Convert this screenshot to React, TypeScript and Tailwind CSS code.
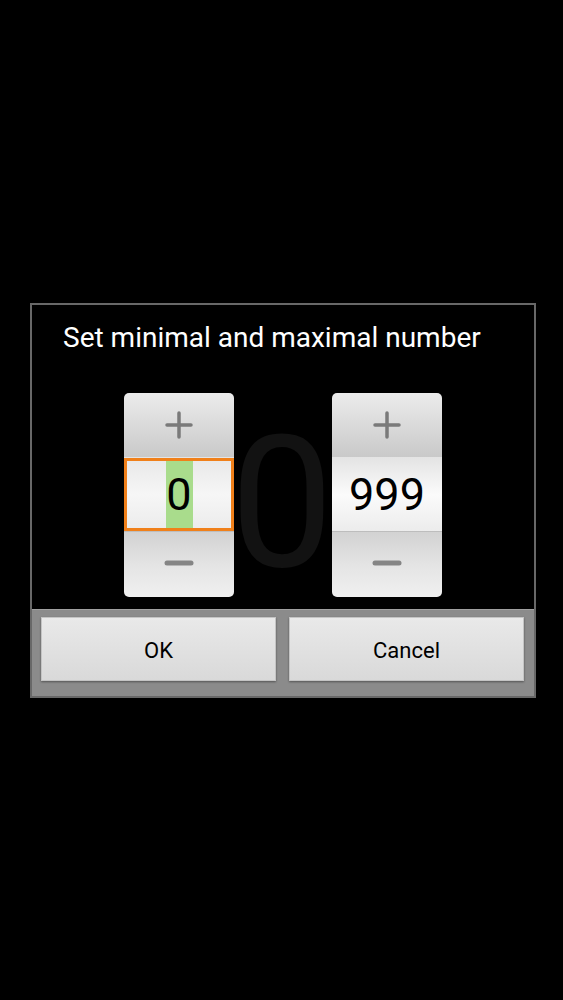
import React from 'react';

const font = { fontFamily: 'Roboto, "Noto Sans", sans-serif' };

function Plus() {
  return (
    <svg width="30" height="30" viewBox="0 0 30 30">
      <path d="M3 15h24M15 3v24" stroke="#7a7a7a" strokeWidth="3.5" strokeLinecap="round" />
    </svg>
  );
}

function Minus() {
  return (
    <svg width="30" height="8" viewBox="0 0 30 8">
      <path d="M3 4h24" stroke="#858585" strokeWidth="5" strokeLinecap="round" />
    </svg>
  );
}

interface PickerProps {
  value: string;
  focused?: boolean;
}

const NumberPicker: React.FC<PickerProps> = ({ value, focused }) => {
  return (
    <div className="flex flex-col w-[110px] h-[204px] rounded-[5px] overflow-hidden">
      <div className="h-[65px] flex items-center justify-center bg-gradient-to-b from-[#ececec] to-[#c9c9c9] border-b border-[#e4e4e4]">
        <Plus />
      </div>
      {focused ? (
        <div className="h-[73px] border-[3px] border-[#f0801a] bg-gradient-to-b from-[#e9e9e9] via-[#f6f6f6] to-[#ececec] flex justify-center">
          <div className="w-[27px] h-full bg-[#a9dc8c] flex items-center justify-center">
            <span className="text-[45px] leading-none text-black" style={font}>{value}</span>
          </div>
        </div>
      ) : (
        <div className="h-[73px] bg-gradient-to-b from-[#e4e4e4] via-[#fbfbfb] to-[#ececec] flex items-center justify-center">
          <span className="text-[45px] leading-none text-black" style={font}>{value}</span>
        </div>
      )}
      <div className="h-[66px] pb-[3px] flex items-center justify-center bg-gradient-to-b from-[#d2d2d2] via-[#e4e4e4] to-[#f0f0f0] border-t border-[#bdbdbd]">
        <Minus />
      </div>
    </div>
  );
};

export default function App() {
  return (
    <div className="w-[563px] h-[1000px] bg-black pt-[303px] pl-[30px]" style={font}>
      <div className="w-[506px] h-[395px] border-2 border-[#686868] flex flex-col">
        <div className="h-[304px] bg-black flex flex-col">
          <div className="pl-[31px] pt-[17px] text-[28px] leading-[32px] text-white">
            Set minimal and maximal number
          </div>
          <div className="relative flex pl-[92px] gap-[98px] mt-[39px]">
            <span className="absolute left-[198px] top-[22px] w-[104px] text-center text-[184px] leading-[176px] text-[#121212]">
              0
            </span>
            <div className="relative">
              <NumberPicker value="0" focused />
            </div>
            <div className="relative">
              <NumberPicker value="999" />
            </div>
          </div>
        </div>
        <div className="flex-1 bg-[#8b8b8b] border-t border-[#a0a0a0] flex gap-[13px] pl-[9px] pr-[10px] pt-[7px] pb-[13px]">
          <button className="flex-1 h-[64px] pt-[3px] bg-gradient-to-b from-[#e9e9e9] to-[#d9d9d9] border border-[#c4c4c4] shadow-[0_1px_2px_rgba(0,0,0,0.4)] text-[22px] text-black">
            OK
          </button>
          <button className="flex-1 h-[64px] pt-[3px] bg-gradient-to-b from-[#e9e9e9] to-[#d9d9d9] border border-[#c4c4c4] shadow-[0_1px_2px_rgba(0,0,0,0.4)] text-[22px] text-black">
            Cancel
          </button>
        </div>
      </div>
    </div>
  );
}
